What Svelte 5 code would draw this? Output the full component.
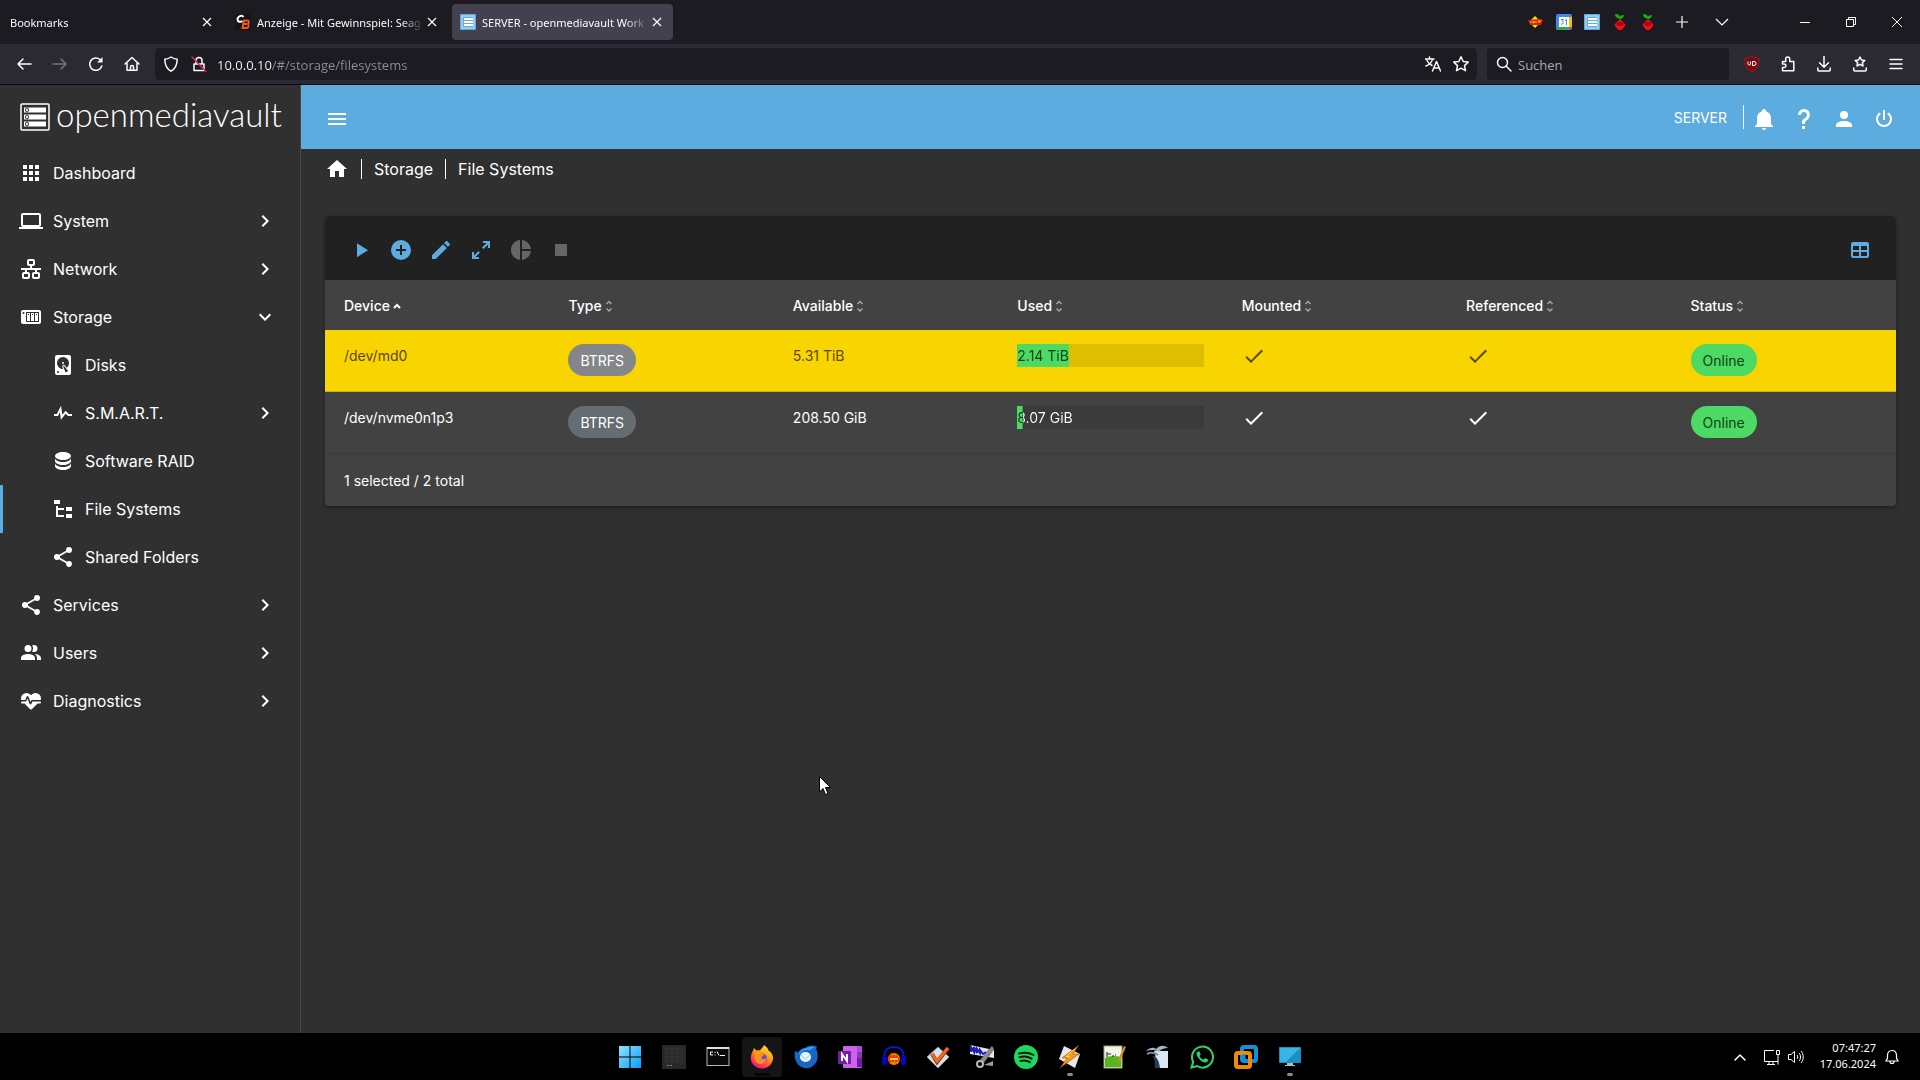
<script>
  const paths = {
    apps: 'M16,20H20V16H16M16,14H20V10H16M10,8H14V4H10M16,8H20V4H16M10,14H14V10H10M4,14H8V10H4M4,20H8V16H4M10,20H14V16H10M4,8H8V4H4V8Z',
    laptop: 'M4,6H20V16H4M20,18A2,2 0 0,0 22,16V6C22,4.89 21.1,4 20,4H4C2.89,4 2,4.89 2,6V16A2,2 0 0,0 4,18H0V20H24V18H20Z',
    lan: 'M10,2C8.89,2 8,2.89 8,4V7C8,8.11 8.89,9 10,9H11V11H2V13H6V15H5C3.89,15 3,15.89 3,17V20C3,21.11 3.89,22 5,22H9C10.11,22 11,21.11 11,20V17C11,15.89 10.11,15 9,15H8V13H16V15H15C13.89,15 13,15.89 13,17V20C13,21.11 13.89,22 15,22H19C20.11,22 21,21.11 21,20V17C21,15.89 20.11,15 19,15H18V13H22V11H13V9H14C15.11,9 16,8.11 16,7V4C16,2.89 15.11,2 14,2H10M10,4H14V7H10V4M5,17H9V20H5V17M15,17H19V20H15V17Z',
    nas: 'M4,5C2.89,5 2,5.89 2,7V17C2,18.11 2.89,19 4,19H20C21.11,19 22,18.11 22,17V7C22,5.89 21.11,5 20,5H4M4.5,7A1,1 0 0,1 5.5,8A1,1 0 0,1 4.5,9A1,1 0 0,1 3.5,8A1,1 0 0,1 4.5,7M7,7H20V17H7V7M8,8V16H11V8H8M12,8V16H15V8H12M16,8V16H19V8H16M9,9H10V10H9V9M13,9H14V10H13V9M17,9H18V10H17V9Z',
    harddisk: 'M6,2H18A2,2 0 0,1 20,4V20A2,2 0 0,1 18,22H6A2,2 0 0,1 4,20V4A2,2 0 0,1 6,2M12,4A6,6 0 0,0 6,10C6,13.31 8.69,16 12.1,16L11.22,13.77C10.95,13.29 11.11,12.68 11.59,12.4L12.45,11.9C12.93,11.63 13.54,11.79 13.82,12.27L15.74,14.69C17.12,13.59 18,11.9 18,10A6,6 0 0,0 12,4M12,9A1,1 0 0,1 13,10A1,1 0 0,1 12,11A1,1 0 0,1 11,10A1,1 0 0,1 12,9M7,18A1,1 0 0,0 6,19A1,1 0 0,0 7,20A1,1 0 0,0 8,19A1,1 0 0,0 7,18M12.09,13.27L14.58,19.58L17.17,18.08L12.95,12.77L12.09,13.27Z',
    pulse: 'M3,13H5.79L10.1,4.79L11.28,13.75L14.5,9.66L17.83,13H21V15H17L14.67,12.67L9.92,18.73L8.94,11.31L7,15H3V13Z',
    database: 'M12,3C7.58,3 4,4.79 4,7C4,9.21 7.58,11 12,11C16.42,11 20,9.21 20,7C20,4.79 16.42,3 12,3M4,9V12C4,14.21 7.58,16 12,16C16.42,16 20,14.21 20,12V9C20,11.21 16.42,13 12,13C7.58,13 4,11.21 4,9M4,14V17C4,19.21 7.58,21 12,21C16.42,21 20,19.21 20,17V14C20,16.21 16.42,18 12,18C7.58,18 4,16.21 4,14Z',
    tree: 'M3,3H9V7H3V3M15,10H21V14H15V10M15,17H21V21H15V17M13,13H7V18H13V20H7L5,20V9H7V11H13V13Z',
    share: 'M18,16.08C17.24,16.08 16.56,16.38 16.04,16.85L8.91,12.7C8.96,12.47 9,12.24 9,12C9,11.76 8.96,11.53 8.91,11.3L15.96,7.19C16.5,7.69 17.21,8 18,8A3,3 0 0,0 21,5A3,3 0 0,0 18,2A3,3 0 0,0 15,5C15,5.24 15.04,5.47 15.09,5.7L8.04,9.81C7.5,9.31 6.79,9 6,9A3,3 0 0,0 3,12A3,3 0 0,0 6,15C6.79,15 7.5,14.69 8.04,14.19L15.16,18.34C15.11,18.55 15.08,18.77 15.08,19C15.08,20.61 16.39,21.91 18,21.91C19.61,21.91 20.92,20.61 20.92,19A2.92,2.92 0 0,0 18,16.08Z',
    users: 'M16 17V19H2V17S2 13 9 13 16 17 16 17M12.5 7.5A3.5 3.5 0 1 0 9 11A3.5 3.5 0 0 0 12.5 7.5M15.94 13A5.32 5.32 0 0 1 18 17V19H22V17S22 13.37 15.94 13M15 4A3.39 3.39 0 0 0 13.07 4.59A5 5 0 0 1 13.07 10.41A3.39 3.39 0 0 0 15 11A3.5 3.5 0 0 0 15 4Z',
    heart: 'M7.5,4A5.5,5.5 0 0,0 2,9.5C2,10 2.09,10.5 2.22,11H6.3L7.57,7.63C7.87,6.83 9.05,6.75 9.43,7.63L11.5,13L12.09,11.58C12.22,11.25 12.57,11 13,11H21.78C21.91,10.5 22,10 22,9.5A5.5,5.5 0 0,0 16.5,4C14.64,4 13,4.93 12,6.34C11,4.93 9.36,4 7.5,4V4M3,12.5A1,1 0 0,0 2,13.5A1,1 0 0,0 3,14.5H5.44L11,20C12,20.9 12,20.9 13,20L18.56,14.5H21A1,1 0 0,0 22,13.5A1,1 0 0,0 21,12.5H13.4L12.47,14.8C12.07,15.81 10.92,15.67 10.55,14.83L8.5,9.5L7.54,11.83C7.39,12.21 7.05,12.5 6.6,12.5H3Z',
    right: 'M8.59,16.58L13.17,12L8.59,7.41L10,6L16,12L10,18L8.59,16.58Z',
    down: 'M7.41,8.58L12,13.17L16.59,8.58L18,10L12,16L6,10L7.41,8.58Z',
    bell: 'M21,19V20H3V19L5,17V11C5,7.9 7.03,5.17 10,4.29C10,4.19 10,4.1 10,4A2,2 0 0,1 12,2A2,2 0 0,1 14,4C14,4.1 14,4.19 14,4.29C16.97,5.17 19,7.9 19,11V17L21,19M14,21A2,2 0 0,1 12,23A2,2 0 0,1 10,21',
    help: 'M10,19H13V22H10V19M12,2C17.35,2.22 19.68,7.62 16.5,11.67C15.67,12.67 14.33,13.33 13.67,14.17C13,15 13,16 13,17H10C10,15.33 10,13.92 10.67,12.92C11.33,11.92 12.67,11.33 13.5,10.67C15.92,8.43 15.32,5.26 12,5A3,3 0 0,0 9,8H6A6,6 0 0,1 12,2Z',
    account: 'M12,4A4,4 0 0,1 16,8A4,4 0 0,1 12,12A4,4 0 0,1 8,8A4,4 0 0,1 12,4M12,14C16.42,14 20,15.79 20,18V20H4V18C4,15.79 7.58,14 12,14Z',
    power: 'M16.56,5.44L15.11,6.89C16.84,7.94 18,9.83 18,12A6,6 0 0,1 12,18A6,6 0 0,1 6,12C6,9.83 7.16,7.94 8.88,6.88L7.44,5.44C5.36,6.88 4,9.28 4,12A8,8 0 0,0 12,20A8,8 0 0,0 20,12C20,9.28 18.64,6.88 16.56,5.44M13,3H11V13H13',
    home: 'M10,20V14H14V20H19V12H22L12,3L2,12H5V20H10Z',
    play: 'M8,5.14V19.14L19,12.14L8,5.14Z',
    plus: 'M17,13H13V17H11V13H7V11H11V7H13V11H17M12,2A10,10 0 0,0 2,12A10,10 0 0,0 12,22A10,10 0 0,0 22,12A10,10 0 0,0 12,2Z',
    pencil: 'M20.71,7.04C21.1,6.65 21.1,6 20.71,5.63L18.37,3.29C18,2.9 17.35,2.9 16.96,3.29L15.12,5.12L18.87,8.87M3,17.25V21H6.75L17.81,9.93L14.06,6.18L3,17.25Z',
    expand: 'M10,21V19H6.41L10.91,14.5L9.5,13.09L5,17.59V14H3V21H10M14.5,10.91L19,6.41V10H21V3H14V5H17.59L13.09,9.5L14.5,10.91Z',
    pie: 'M11,2V22C5.9,21.5 2,17.2 2,12C2,6.8 5.9,2.5 11,2M13,2V11H22C21.5,6.2 17.8,2.5 13,2M13,13V22C17.7,21.5 21.5,17.8 22,13H13Z',
    stop: 'M18,18H6V6H18V18Z',
    table: 'M5,4H19A2,2 0 0,1 21,6V18A2,2 0 0,1 19,20H5A2,2 0 0,1 3,18V6A2,2 0 0,1 5,4M5,8V12H11V8H5M13,8V12H19V8H13M5,14V18H11V14H5M13,14V18H19V14H13Z',
    check: 'M21,7L9,19L3.5,13.5L4.91,12.09L9,16.17L19.59,5.59L21,7Z',
    menu: 'M3,6H21V8H3V6M3,11H21V13H3V11M3,16H21V18H3V16Z'
  };

  const nav = [
    { label: 'Dashboard', icon: 'apps' },
    { label: 'System', icon: 'laptop', arrow: 'right' },
    { label: 'Network', icon: 'lan', arrow: 'right' },
    { label: 'Storage', icon: 'nas', arrow: 'down' },
    { label: 'Disks', icon: 'harddisk', sub: true },
    { label: 'S.M.A.R.T.', icon: 'pulse', sub: true, arrow: 'right' },
    { label: 'Software RAID', icon: 'database', sub: true },
    { label: 'File Systems', icon: 'tree', sub: true, active: true },
    { label: 'Shared Folders', icon: 'share', sub: true },
    { label: 'Services', icon: 'share', arrow: 'right' },
    { label: 'Users', icon: 'users', arrow: 'right' },
    { label: 'Diagnostics', icon: 'heart', arrow: 'right' }
  ];

  const actions = [
    { label: 'Mount', icon: 'play' },
    { label: 'Create', icon: 'plus' },
    { label: 'Edit', icon: 'pencil' },
    { label: 'Resize', icon: 'expand' },
    { label: 'Quota', icon: 'pie', disabled: true },
    { label: 'Unmount', icon: 'stop', disabled: true }
  ];

  const columns = ['Device', 'Type', 'Available', 'Used', 'Mounted', 'Referenced', 'Status'];

  const rows = [
    { device: '/dev/md0', type: 'BTRFS', available: '5.31 TiB', used: '2.14 TiB', percent: 28, status: 'Online' },
    { device: '/dev/nvme0n1p3', type: 'BTRFS', available: '208.50 GiB', used: '8.07 GiB', percent: 3, status: 'Online' }
  ];

  let selected = $state(0);
  let url = $state('10.0.0.10/#/storage/filesystems');
  let query = $state('');
</script>

{#snippet icon(name)}
  <svg class="mdi" viewBox="0 0 24 24" width="24" height="24" aria-hidden="true"><path d={paths[name]} /></svg>
{/snippet}

{#snippet cross()}
  <svg viewBox="0 0 16 16" width="16" height="16" class="line" aria-hidden="true"><path d="M4 4l8 8M12 4l-8 8" /></svg>
{/snippet}

{#snippet omvFavicon()}
  <svg viewBox="0 0 16 16" width="16" height="16" aria-hidden="true">
    <rect width="16" height="16" fill="#5dacdf" />
    <rect x="2" y="2" width="12" height="12" fill="none" stroke="#d4eafa" />
    <path fill="#fff" d="M4 4h9v2H4zM4 7h9v2H4zM4 10h9v2H4z" />
  </svg>
{/snippet}

{#snippet piholeFavicon()}
  <svg viewBox="0 0 16 16" width="16" height="16" aria-hidden="true">
    <path d="M8 5C4 4 3 2 3 0c3 0 5 1 5 3 0-1 1-2 4-2 0 2-2 4-4 4z" fill="#12b212" />
    <path d="M8 5l5 5a1.500 1.500 0 0 1 0 2l-3 3.500a3 3 0 0 1-4 0L3 12a1.500 1.500 0 0 1 0-2z" fill="#f60d1a" />
    <ellipse cx="8" cy="10" rx="3.500" ry="2" fill="#a80408" />
  </svg>
{/snippet}

<div class="screen">
  <header class="browser">
    <div class="tabs">
      <div class="tab">
        <button class="tab-title">Bookmarks</button>
        <button class="tab-close" aria-label="Close tab">{@render cross()}</button>
      </div>
      <div class="tab">
        <svg viewBox="0 0 16 16" width="16" height="16" aria-hidden="true">
          <rect width="16" height="16" rx="3" fill="#151515" />
          <path d="M8.500 3C7 .8 2.500 2 2.500 5.500c0 2.500 3 3 5 1.500" fill="none" stroke="#fff" stroke-width="2" />
          <path d="M9 6.500h3.500c2 0 1.500 3 0 3.500 1.500 0 1.500 4-1 4H7.500zM9 10h3" fill="none" stroke="#f0591c" stroke-width="2" />
        </svg>
        <button class="tab-title">Anzeige - Mit Gewinnspiel: Seag</button>
        <button class="tab-close" aria-label="Close tab">{@render cross()}</button>
      </div>
      <div class="tab current">
        {@render omvFavicon()}
        <button class="tab-title">SERVER - openmediavault Work</button>
        <button class="tab-close" aria-label="Close tab">{@render cross()}</button>
      </div>
      <div class="pinned">
        <button aria-label="Deals">
          <svg viewBox="0 0 16 16" width="16" height="16" aria-hidden="true">
            <path d="M7 2l6 6-6 6-6-6z" fill="#ffe100" />
            <path d="M0 6l13-1 2 1-2 5H2z" fill="#d0200c" />
            <path d="M3 7v2M5 7v2h1V7M8 7v2M10 7h3M11 7v2" stroke="#ffd500" fill="none" />
          </svg>
        </button>
        <button aria-label="Calendar">
          <svg viewBox="0 0 16 16" width="16" height="16" aria-hidden="true">
            <rect width="16" height="16" rx="2" fill="#4285f4" />
            <path d="M13 3h3v10h-3z" fill="#fbbc04" />
            <path d="M0 13h13v3H2a2 2 0 0 1-2-2z" fill="#34a853" />
            <path d="M13 13h3l-3 3z" fill="#ea4335" />
            <path d="M3 3h10v10H3z" fill="#fff" />
            <path d="M5 5.500h2.500l-1.200 2c2 .3 1.500 3-1.300 2.500M9 6.500l1.500-1V11" fill="none" stroke="#4285f4" />
          </svg>
        </button>
        <button aria-label="openmediavault">{@render omvFavicon()}</button>
        <button aria-label="Pi-hole">{@render piholeFavicon()}</button>
        <button aria-label="Pi-hole 2">{@render piholeFavicon()}</button>
      </div>
      <button class="new-tab" aria-label="New tab">
        <svg class="line" viewBox="0 0 16 16" width="16" height="16" aria-hidden="true"><path d="M8 2v12M2 8h12" /></svg>
      </button>
      <button class="all-tabs" aria-label="List all tabs">
        <svg class="line" viewBox="0 0 16 16" width="16" height="16" aria-hidden="true"><path d="M2 5l6 6 6-6" /></svg>
      </button>
      <div class="window-buttons">
        <button aria-label="Minimise"><svg class="thin" viewBox="0 0 10 10" width="10" height="10" aria-hidden="true"><path d="M0 5.500h10" /></svg></button>
        <button aria-label="Restore"><svg class="thin" viewBox="0 0 10 10" width="10" height="10" aria-hidden="true"><path d="M.5 2.500h7v7h-7zM2.500 2.500v-2h7v7h-2" /></svg></button>
        <button aria-label="Close"><svg class="thin" viewBox="0 0 10 10" width="10" height="10" aria-hidden="true"><path d="M0 0l10 10M10 0L0 10" /></svg></button>
      </div>
    </div>

    <div class="toolbar">
      <div class="tools">
        <button aria-label="Back"><svg class="bold" viewBox="0 0 16 16" width="16" height="16" aria-hidden="true"><path d="M15 8H2M7 3L2 8l5 5" /></svg></button>
        <button aria-label="Forward" class="dim"><svg class="bold" viewBox="0 0 16 16" width="16" height="16" aria-hidden="true"><path d="M1 8h13M9 3l5 5-5 5" /></svg></button>
        <button aria-label="Reload"><svg class="bold" viewBox="0 0 16 16" width="16" height="16" aria-hidden="true"><path d="M13.800 10A6.200 6.200 0 1 1 12 3.500l1.500 1.500" /><path class="fill" d="M14.500 1v5.500H9z" /></svg></button>
        <button aria-label="Home"><svg class="bold" viewBox="0 0 16 16" width="16" height="16" aria-hidden="true"><path d="M1 8l7-6.500L15 8M3 7v7.200h10V7M6.500 14v-3a1.500 1.500 0 0 1 3 0v3" /></svg></button>
      </div>
      <div class="field url">
        <button aria-label="Tracking protection"><svg class="bold" viewBox="0 0 16 16" width="16" height="16" aria-hidden="true"><path d="M8 1C6 2.500 4 3 1.800 3.200c0 5 1 9 6.200 12 5.200-3 6.200-7 6.200-12C12 3 10 2.500 8 1z" /></svg></button>
        <button aria-label="Connection not secure">
          <svg class="bold" viewBox="0 0 16 16" width="16" height="16" aria-hidden="true"><path d="M3 8h10v6.500H3zM5 8V4.500a3 3 0 0 1 6 0V8" /><path class="slash" d="M1 1l14 14.500" /></svg>
        </button>
        <input class="address" type="text" aria-label="Address" bind:value={url} />
        <button aria-label="Translate page">
          <svg class="bold" viewBox="0 0 16 16" width="16" height="16" aria-hidden="true"><path d="M0 3h9M4.500 1v2M1 10c4-1.500 6-4 6.500-7M2 4.500c1 2 3 4 5 5M7.500 15L11.500 5.500 15.500 15M9 12h5" /></svg>
        </button>
        <button aria-label="Bookmark page">
          <svg class="bold" viewBox="0 0 16 16" width="16" height="16" aria-hidden="true"><path d="M8 .8l2.200 4.700 5 .6-3.700 3.500 1 5.100L8 12.200l-4.500 2.500 1-5.100L.8 6.100l5-.6z" /></svg>
        </button>
      </div>
      <label class="field search">
        <svg class="bold" viewBox="0 0 16 16" width="16" height="16" aria-hidden="true"><circle cx="6.500" cy="6.500" r="5" /><path d="M10.300 10.300l4.700 4.700" /></svg>
        <input type="text" placeholder="Suchen" aria-label="Search" bind:value={query} />
      </label>
      <div class="tools">
        <button aria-label="Ad blocker">
          <svg viewBox="0 0 16 16" width="16" height="16" aria-hidden="true">
            <path d="M8 0c2 1.500 4 2 7 2 0 8-1 11-7 14C2 13 1 10 1 2c3 0 5-.5 7-2z" fill="#800610" stroke="#b0353c" stroke-width=".5" />
            <path d="M4 5.500v2.300a1.200 1.200 0 0 0 2.500 0V5.500M8.500 5.500v4h1.500a2 2 0 0 0 0-4z" fill="none" stroke="#fff" />
          </svg>
        </button>
        <button aria-label="Extensions">
          <svg class="bold" viewBox="0 0 16 16" width="16" height="16" aria-hidden="true"><path d="M2.500 5.500h3.200V3a2 2 0 0 1 4 0v2.500h4.100v9.300H2.500v-3.300h1.700a1.700 1.700 0 0 0 0-3.400H2.500z" /></svg>
        </button>
        <button aria-label="Downloads">
          <svg class="bold" viewBox="0 0 16 16" width="16" height="16" aria-hidden="true"><path d="M8 0v11M3.500 6.700L8 11.200l4.500-4.500M1.800 12v2a1 1 0 0 0 1 1h10.400a1 1 0 0 0 1-1v-2" /></svg>
        </button>
        <button aria-label="Bookmarks menu">
          <svg class="bold" viewBox="0 0 16 16" width="16" height="16" aria-hidden="true"><path d="M8 1l1.500 3 3.300.4-2.400 2.200.6 3.400-3-1.700-3 1.700.6-3.400-2.400-2.200L6.500 4zM1.800 12v2a1 1 0 0 0 1 1h10.400a1 1 0 0 0 1-1v-2" /></svg>
        </button>
        <button aria-label="Application menu">
          <svg class="bold" viewBox="0 0 16 16" width="16" height="16" aria-hidden="true"><path d="M2 3.500h12M2 8h12M2 12.500h12" /></svg>
        </button>
      </div>
    </div>
  </header>

  <div class="app">
    <nav class="sidebar" aria-label="Main">
      <a class="brand" href="#/dashboard">
        <svg viewBox="0 0 30 28" width="30" height="28" aria-hidden="true">
          <rect x="1" y="1" width="28" height="26" rx="1" fill="none" stroke="#fff" stroke-width="1.500" />
          <path d="M4 4.500h22v5H4zM4 11.500h22v5H4zM4 18.500h22v5H4z" fill="#fff" />
          <g fill="#fff" stroke="#303030"><ellipse cx="7" cy="7" rx="1.500" ry="2" /><ellipse cx="7" cy="14" rx="1.500" ry="2" /><ellipse cx="7" cy="21" rx="1.500" ry="2" /></g>
        </svg>
        <span>openmediavault</span>
      </a>
      {#each nav as item}
        <a class="nav-item" class:sub={item.sub} class:active={item.active} href="#/{item.label.toLowerCase().replaceAll(' ', '')}">
          {@render icon(item.icon)}
          <span>{item.label}</span>
          {#if item.arrow}{@render icon(item.arrow)}{/if}
        </a>
      {/each}
    </nav>

    <div class="content">
      <div class="topbar">
        <button aria-label="Toggle navigation">{@render icon('menu')}</button>
        <span class="host">SERVER</span>
        <button aria-label="Notifications">{@render icon('bell')}</button>
        <button aria-label="Help">{@render icon('help')}</button>
        <button aria-label="User settings">{@render icon('account')}</button>
        <button aria-label="Power">{@render icon('power')}</button>
      </div>

      <div class="crumbs">
        <a href="#/" aria-label="Home">{@render icon('home')}</a>
        <a href="#/storage">Storage</a>
        <a href="#/storage/filesystems">File Systems</a>
      </div>

      <main class="card">
        <div class="actions">
          {#each actions as action}
            <button aria-label={action.label} disabled={action.disabled}>{@render icon(action.icon)}</button>
          {/each}
          <button class="columns" aria-label="Columns">{@render icon('table')}</button>
        </div>
        <table>
          <thead>
            <tr>
              {#each columns as column, i}
                <th scope="col">
                  <button>
                    {column}
                    <svg class="sort" class:sorted={i === 0} viewBox="0 0 8 14" width="8" height="14" aria-hidden="true">
                      {#if i === 0}<path d="M1 9l3-3 3 3" />{:else}<path d="M1.500 5L4 2.500 6.500 5M1.500 9.500L4 12l2.500-2.500" />{/if}
                    </svg>
                  </button>
                </th>
              {/each}
            </tr>
          </thead>
          <tbody>
            {#each rows as row, i}
              <tr class:selected={i === selected} onclick={() => (selected = i)}>
                <td>{row.device}</td>
                <td><span class="pill">{row.type}</span></td>
                <td>{row.available}</td>
                <td><div class="meter" style="--used: {row.percent}%"><span>{row.used}</span></div></td>
                <td>{@render icon('check')}</td>
                <td>{@render icon('check')}</td>
                <td><span class="pill online">{row.status}</span></td>
              </tr>
            {/each}
          </tbody>
        </table>
        <div class="summary">1 selected / {rows.length} total</div>
      </main>
    </div>
  </div>

  <footer class="taskbar">
    <div class="side"></div>
    <div class="programs">
      <button aria-label="Start">
        <svg viewBox="0 0 24 24" width="24" height="24" aria-hidden="true">
          <defs><linearGradient id="win" x1="0" y1="0" x2="1" y2="1"><stop offset="0" stop-color="#8fe3ff" /><stop offset="1" stop-color="#0a9cf5" /></linearGradient></defs>
          <path fill="url(#win)" d="M1 1h10.500v10.500H1zM12.500 1H23v10.500H12.500zM1 12.500h10.500V23H1zM12.500 12.500H23V23H12.500z" />
        </svg>
      </button>
      <button aria-label="Monitor">
        <svg viewBox="0 0 24 24" width="24" height="24" aria-hidden="true">
          <rect width="24" height="24" fill="#29292b" />
          <path d="M2 4h20M2 8h20M2 12h20M2 16h20M5 2v17M10 2v17M15 2v17M20 2v17" stroke="#343436" /><path d="M5 20.500h2M8 20.500h2" stroke="#888" />
        </svg>
      </button>
      <button aria-label="Command prompt">
        <svg viewBox="0 0 24 24" width="24" height="24" aria-hidden="true">
          <rect x="1" y="2.500" width="22" height="18" fill="#0a0a0a" stroke="#b5b5b5" /><path d="M1 3h22" stroke="#ddd" stroke-width="2" />
          <path d="M7 7H4.500v3H7M9 7v1M9 9.500v1M11 6.500l2 4M14 10.500h5" stroke="#fff" fill="none" />
        </svg>
      </button>
      <button class="focused" aria-label="Firefox">
        <svg viewBox="0 0 24 24" width="24" height="24" aria-hidden="true">
          <defs><linearGradient id="fox" x1=".8" y1="0" x2=".3" y2="1"><stop offset="0" stop-color="#ffe83a" /><stop offset=".45" stop-color="#ff980e" /><stop offset=".8" stop-color="#ff3750" /><stop offset="1" stop-color="#e31587" /></linearGradient></defs>
          <path fill="url(#fox)" d="M14 0c2 2 4 3 4.500 5.500C21 7 23.500 10 23 14c-.5 5-5 9.500-11 9.500S.8 19 .8 13c0-3 1-5 2.200-7.500L4 3l2.500 2.500C8 5 9 5 10 5.500 11 3 13 3 14 0z" />
          <circle cx="12" cy="13.500" r="5" fill="#7543e0" />
          <path fill="#ff9a16" d="M5 8c3-2 6-1 7 1 1.500 0 2.500.5 2.500 1-2 1-3 1.500-3 3 1 2 4 1.500 5-1 0 5-3 7-6 7s-6-3-6-6z" opacity=".9" />
        </svg>
      </button>
      <button aria-label="Thunderbird">
        <svg viewBox="0 0 24 24" width="24" height="24" aria-hidden="true">
          <path fill="#1667c4" d="M11 3c5-3 9-3 12-1-1 1-1 2 0 4 1.500 6 .5 11-3 14-5 5-12 4-16-.500-3-4-4-8.500-3-13.500l3 1.500C5 5 8 3 11 3z" />
          <path fill="#3a9bf2" d="M11 3.500c3-2 8-2.500 10-1-2.500.5-4 1.500-5 3C12 4 7 6 5 10c0-3 2.500-5.500 6-6.500z" />
          <ellipse cx="11.500" cy="12" rx="5.500" ry="5" fill="#e9f6ff" /><path d="M7 10l4.500 4 4.500-4" fill="none" stroke="#8ec4ec" />
        </svg>
      </button>
      <button aria-label="OneNote">
        <svg viewBox="0 0 24 24" width="24" height="24" aria-hidden="true">
          <rect x="5" y="1" width="19" height="22" rx="1" fill="#ca64ea" /><path d="M19 1h4a1 1 0 0 1 1 1v5h-5z" fill="#ae4bd5" /><path d="M19 7h5v6h-5z" fill="#9332bf" /><path d="M19 13h5v9h-5z" fill="#7719aa" />
          <rect y="6" width="13" height="13" rx="1" fill="#7719aa" /><path d="M4 16V9l5 7V9" fill="none" stroke="#fff" stroke-width="2" />
        </svg>
      </button>
      <button aria-label="Audacity">
        <svg viewBox="0 0 24 24" width="24" height="24" aria-hidden="true">
          <path d="M3 16C1 6 5 2 12 2s11 4 9 14" fill="none" stroke="#0a14c8" stroke-width="2" />
          <circle cx="12" cy="14" r="6" fill="#ff8c00" /><path d="M6 14l1-1 1 3 1-5 2 6 1-7 2 6 1-4 1 3 2-1" fill="none" stroke="#ff2a00" stroke-width="2" /><path d="M8 14h8" stroke="#ffe14d" stroke-width="2" />
          <rect y="11" width="5" height="9" rx="2" fill="#0505c4" /><rect x="19" y="11" width="5" height="9" rx="2" fill="#0505c4" />
        </svg>
      </button>
      <button aria-label="Tasks">
        <svg viewBox="0 0 24 24" width="24" height="24" aria-hidden="true">
          <path d="M12 2l11 10-11 11L1 12z" fill="#d9dfea" stroke="#8d98ae" /><path d="M6 9l5 8L22 3" fill="none" stroke="#8a2d05" stroke-width="4" /><path d="M6 9l5 7L22 3" fill="none" stroke="#ee6b1e" stroke-width="3" />
        </svg>
      </button>
      <button aria-label="Wave editor">
        <svg viewBox="0 0 24 24" width="24" height="24" aria-hidden="true">
          <path d="M0 0l24 5v8L0 9z" fill="#e4e4ec" /><path d="M1 7V2l3 5V2l3 6V4l3 4V5l3 4 3-2" fill="none" stroke="#1c1cc0" stroke-width="2" />
          <path d="M22 1L10 15l3 4L24 4z" fill="#8b8b8e" stroke="#444" stroke-width=".5" /><circle cx="10" cy="19" r="3" fill="none" stroke="#b7b7b7" stroke-width="2" /><path d="M14 20l9-4v5z" fill="#9a9a9a" />
        </svg>
      </button>
      <button aria-label="Spotify">
        <svg viewBox="0 0 24 24" width="24" height="24" aria-hidden="true">
          <circle cx="12" cy="12" r="12" fill="#1ed760" /><path d="M5 8.500c5-1.500 10-1 14.500 1.500M5.500 12.300c4-1.200 8.500-.8 12 1.400M6.500 16c3.500-1 6.500-.6 9.500 1.200" fill="none" stroke="#06180c" stroke-width="2" stroke-linecap="round" />
        </svg>
      </button>
      <button class="running" aria-label="Winamp">
        <svg viewBox="0 0 24 24" width="24" height="24" aria-hidden="true">
          <path d="M6 1l16 8-5 14L1 14z" fill="#e8e8ec" /><path d="M21 0L4 13h5l-7 10 19-14h-6z" fill="#f79a10" stroke="#7b3d00" stroke-width=".5" /><path d="M17 4L8 11.500h4" fill="none" stroke="#ffd75e" />
        </svg>
      </button>
      <button aria-label="Text editor">
        <svg viewBox="0 0 24 24" width="24" height="24" aria-hidden="true">
          <rect x="2" y="1" width="18" height="22" fill="#f1f4e4" stroke="#9aa380" /><path d="M3 13c6-3 11-2 16-1v10H3z" fill="#58b51d" /><path d="M5 7v5M5 9h4M11 10v2M13 10h1" stroke="#223" fill="none" /><path d="M22 1l-6 14-1 3 3-2 6-14z" fill="#d98a1f" />
        </svg>
      </button>
      <button aria-label="OpenOffice">
        <svg viewBox="0 0 24 24" width="24" height="24" aria-hidden="true">
          <path d="M8 6h14v17H10c0-6 0-11-2-17z" fill="#dfe6ee" /><path d="M9 23c0-7 0-9-3-12 4 0 7 3 8 12z" fill="#24405e" /><path d="M0 6c4-4 8-4 10-2 4-4 8-4 12-1-4 0-7 1-9 4C8 4 4 5 0 6z" fill="#9fb4c8" /><path d="M1 9c4-2 8-1 11 1" stroke="#6f8ba6" fill="none" stroke-width="2" />
        </svg>
      </button>
      <button aria-label="WhatsApp">
        <svg viewBox="0 0 24 24" width="24" height="24" aria-hidden="true">
          <path d="M1.500 22.500l1.700-5.600A10.500 10.500 0 1 1 7 21z" fill="none" stroke="#2cd46b" stroke-width="2" />
          <path d="M8 6.500c-2 1-2 3 0 6s5 5 7.500 5c2-.3 2.700-1.500 2.500-3l-3-1.500-1.500 1.700c-2-.8-3.300-2-4-3.800L10.700 9.500 9.500 6.500z" fill="#2cd46b" />
        </svg>
      </button>
      <button aria-label="VMware">
        <svg viewBox="0 0 24 24" width="24" height="24" aria-hidden="true">
          <rect x="8" y="2" width="14" height="14" rx="2" fill="none" stroke="#1590d4" stroke-width="4" /><rect x="2" y="8" width="14" height="14" rx="2" fill="none" stroke="#f38b00" stroke-width="4" /><path d="M14 16h-4V9" fill="none" stroke="#1590d4" stroke-width="3" />
        </svg>
      </button>
      <button class="running" aria-label="Remote desktop">
        <svg viewBox="0 0 24 24" width="24" height="24" aria-hidden="true">
          <rect x="1" y="2" width="22" height="16" rx="1" fill="#1b8fc4" /><path d="M2 3h20L8 17H2z" fill="#35b6e6" /><path d="M9 18h6v2H9zM7 20h10v1H7z" fill="#b6bcc2" />
        </svg>
      </button>
    </div>
    <div class="side tray">
      <button class="tray-arrow" aria-label="Show hidden icons"><svg class="bold" viewBox="0 0 12 12" width="12" height="12" aria-hidden="true"><path d="M1 9l5-5 5 5" /></svg></button>
      <button class="status" aria-label="Network and sound">
        <svg class="thin" viewBox="0 0 16 16" width="16" height="16" aria-hidden="true"><path d="M10 1.500H.5v11H14M5 12.500v3M9 12.500v3M3 15.500h8M12.500 1.500h3v4h-3zM14 5.500v10" /></svg>
        <svg class="thin" viewBox="0 0 16 16" width="16" height="16" aria-hidden="true"><path d="M.5 5.500h2.500l3.500-3v11l-3.500-3H.5zM9 6c1 1 1 3 0 4M11 4c2 2 2 6 0 8M13 2c3 3 3 9 0 12" /></svg>
      </button>
      <button class="clock"><span>07:47:27</span><span>17.06.2024</span></button>
      <button class="alerts" aria-label="Notifications center"><svg class="line" viewBox="0 0 16 16" width="16" height="16" aria-hidden="true"><path d="M8 1.500c-3 0-4.500 2-4.500 5V9L2 12h12l-1.500-3V6.500c0-3-1.500-5-4.500-5zM6 12.500a2 2 0 0 0 4 0" /></svg></button>
    </div>
  </footer>

  <svg class="pointer" viewBox="0 0 12 19" width="12" height="19" aria-hidden="true">
    <path d="M.5.5v15.500l3.500-3.500 2.500 6 2.500-1-2.500-6h5z" fill="#fff" stroke="#000" />
  </svg>
</div>

<style>
  :global(body) {
    margin: 0;
    background: #303030;
  }

  .screen {
    position: relative;
    display: flex;
    flex-direction: column;
    min-height: 100vh;
    color: #fff;
    font-family: Inter, 'Noto Sans', sans-serif;
    font-size: 14px;
  }

  button {
    display: flex;
    align-items: center;
    justify-content: center;
    margin: 0;
    padding: 0;
    border: 0;
    background: none;
    color: inherit;
    font: inherit;
  }

  a {
    color: inherit;
    text-decoration: none;
  }

  svg {
    display: block;
    flex: none;
  }

  .mdi {
    fill: currentColor;
  }

  .line,
  .thin,
  .bold {
    fill: none;
    stroke: currentColor;
    stroke-width: 1.2;
  }

  .thin {
    stroke-width: 1;
  }

  .bold {
    stroke-width: 1.5;
    stroke-linejoin: round;
    stroke-linecap: round;
  }

  .bold .fill {
    fill: currentColor;
    stroke: none;
  }

  .bold .slash {
    stroke: #e22850;
  }

  /* Browser frame */
  .browser {
    background: #2b2a33;
    border-bottom: 1px solid #0c0c14;
    color: #fbfbfe;
    font-family: 'Open Sans', 'Noto Sans', sans-serif;
    font-size: 13px;
  }

  .tabs {
    display: flex;
    align-items: center;
    gap: 4px;
    height: 44px;
    padding-left: 2px;
    background: #1c1b22;
    font-family: 'Noto Sans', 'Open Sans', sans-serif;
    font-size: 11px;
  }

  .tab {
    display: flex;
    align-items: center;
    gap: 6px;
    box-sizing: border-box;
    width: 221px;
    height: 36px;
    padding: 0 4px 0 8px;
    border-radius: 4px;
  }

  .tab.current {
    background: #42414d;
  }

  .tab-title {
    flex: 1;
    justify-content: flex-start;
    white-space: nowrap;
    mask-image: linear-gradient(to left, transparent, #000 24px);
  }

  .tab-close {
    width: 24px;
    height: 24px;
    margin-left: -10px;
  }

  .pinned {
    display: flex;
    margin: 0 -2px 0 auto;
  }

  .pinned button {
    width: 28px;
    height: 28px;
  }

  .new-tab,
  .all-tabs {
    width: 36px;
    height: 36px;
  }

  .window-buttons {
    display: flex;
    margin-left: 38px;
  }

  .window-buttons button {
    width: 46px;
    height: 44px;
  }

  .toolbar {
    display: flex;
    align-items: center;
    height: 40px;
    padding: 0 6px;
  }

  .tools {
    display: flex;
  }

  .tools button {
    width: 36px;
    height: 32px;
  }

  .dim {
    color: #75747c;
  }

  .field {
    display: flex;
    align-items: center;
    box-sizing: border-box;
    height: 32px;
    border-radius: 4px;
    background: #1c1b22;
  }

  .field input {
    flex: 1;
    min-width: 0;
    margin: 0;
    padding: 2px 0 0;
    border: 0;
    outline: 0;
    background: none;
    color: #fbfbfe;
    font: inherit;
  }

  .field input::placeholder {
    color: #a9a8b0;
    opacity: 1;
  }

  .url {
    flex: 1;
    margin: 0 10px 0 5px;
    padding: 0 2px;
  }

  .url button {
    width: 28px;
    height: 28px;
  }

  .field .address {
    margin-left: 4px;
    background: linear-gradient(to right, #fbfbfe 55px, #8f8f98 55px);
    background-clip: text;
    color: transparent;
  }

  .search {
    gap: 6px;
    width: 242px;
    margin-right: 5px;
    padding: 0 9px;
  }

  /* Application */
  .app {
    display: flex;
    flex: 1;
    background: #303030;
  }

  .sidebar {
    box-sizing: border-box;
    width: 301px;
    border-right: 1px solid #474747;
    font-size: 16px;
  }

  .brand {
    display: flex;
    align-items: center;
    gap: 6px;
    height: 64px;
    padding-left: 20px;
    font-family: Lato, 'Open Sans', sans-serif;
    font-size: 33px;
    font-weight: 300;
    line-height: 40px;
  }

  .brand span {
    padding-bottom: 6px;
  }

  .nav-item {
    display: flex;
    align-items: center;
    gap: 10px;
    height: 48px;
    padding: 0 23px 0 16px;
    border-left: 3px solid transparent;
  }

  .nav-item.sub {
    padding-left: 48px;
  }

  .nav-item.active {
    border-left-color: #5dacdf;
  }

  .nav-item span {
    flex: 1;
  }

  .content {
    flex: 1;
    min-width: 0;
  }

  .topbar {
    display: flex;
    align-items: center;
    height: 64px;
    padding: 0 16px;
    background: #5dacdf;
  }

  .topbar button,
  .actions button {
    width: 40px;
    height: 40px;
    padding-top: 4px;
  }

  .host {
    margin-left: auto;
    padding: 2px 16px 0 0;
    border-right: 1px solid #fff;
    line-height: 22px;
  }

  .crumbs {
    display: flex;
    align-items: center;
    height: 40px;
    padding-left: 24px;
    font-size: 16px;
    line-height: 20px;
  }

  .crumbs a + a {
    margin-left: 12px;
    padding-left: 12px;
    border-left: 1px solid #fff;
  }

  .card {
    margin: 27px 24px;
    border-radius: 4px;
    background: #424242;
    box-shadow: 0 2px 4px rgba(0, 0, 0, 0.4);
    overflow: hidden;
  }

  .actions {
    display: flex;
    align-items: center;
    height: 64px;
    padding: 0 16px;
    background: #212121;
    color: #5dacdf;
  }

  .actions button:disabled {
    color: #666;
  }

  .actions .columns {
    margin-left: auto;
  }

  table {
    width: 100%;
    table-layout: fixed;
    border-collapse: collapse;
  }

  th {
    height: 49px;
    padding: 1px 19px 0;
    font-weight: 500;
  }

  th button {
    gap: 3px;
  }

  .sort {
    fill: none;
    stroke: #a4a4a4;
    stroke-width: 1.5;
  }

  .sorted {
    stroke: #fff;
    stroke-width: 2;
  }

  td {
    height: 32px;
    padding: 14px 19px 15px;
    border-bottom: 1px solid #3a3a3a;
    line-height: 23px;
    vertical-align: top;
  }

  .selected td {
    border-bottom-color: #cdb10c;
    background: #f8d500;
    color: #5e4700;
  }

  .pill {
    display: inline-block;
    padding: 2px 12px 0;
    border-radius: 16px;
    background: #656d73;
    color: #fff;
    line-height: 30px;
  }

  .selected .pill {
    background: #84868a;
  }

  .pill.online,
  .selected .pill.online {
    background: #4cd964;
    color: #0d4217;
  }

  .meter {
    background: linear-gradient(#4cd964, #4cd964) no-repeat left / var(--used) 100% rgba(0, 0, 0, 0.1);
  }

  .meter span {
    display: block;
    background: linear-gradient(to right, #0d4217 var(--used), #fff var(--used));
    background-clip: text;
    color: transparent;
  }

  .selected .meter span {
    background-image: linear-gradient(to right, #0d4217 var(--used), #5e4700 var(--used));
  }

  .summary {
    padding: 2px 19px 0;
    line-height: 50px;
  }

  /* Desktop taskbar */
  .taskbar {
    display: flex;
    align-items: center;
    height: 47px;
    background: #000;
    font-family: 'Noto Sans', 'Open Sans', sans-serif;
    font-size: 11px;
  }

  .side {
    flex: 1 1 0;
    padding: 0 20px;
  }

  .programs {
    display: flex;
    gap: 4px;
  }

  .programs button {
    position: relative;
    width: 40px;
    height: 40px;
    border-radius: 4px;
  }

  .programs .focused {
    background: #151515;
  }

  .running::after,
  .focused::after {
    content: '';
    position: absolute;
    bottom: 1px;
    left: 17px;
    width: 6px;
    height: 3px;
    border-radius: 2px;
    background: #8a8a8a;
  }

  .focused::after {
    left: 12px;
    width: 16px;
    background: #050505;
  }

  .tray {
    display: flex;
    align-items: center;
    justify-content: flex-end;
  }

  .status {
    gap: 8px;
    margin: 0 16px 0 18px;
  }

  .clock {
    flex-direction: column;
    align-items: flex-end;
    margin: 0 8px 2px 0;
    line-height: 16px;
  }

  .pointer {
    position: absolute;
    top: 776px;
    left: 819px;
  }
</style>
